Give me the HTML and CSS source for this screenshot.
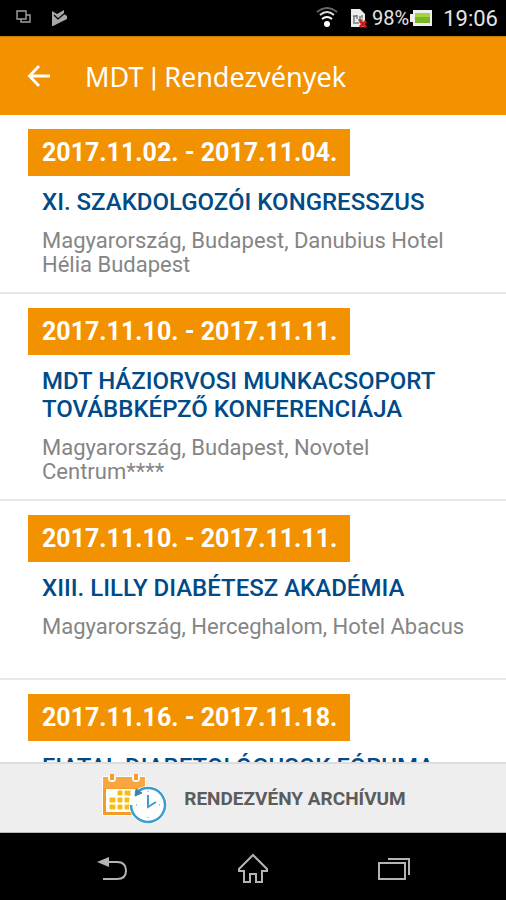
FILE: index.html
```html
<!DOCTYPE html>
<html lang="hu">
<head>
  <meta charset="UTF-8">
  <title>MDT | Rendezvények</title>
  <meta name="viewport" content="width=device-width, initial-scale=1.0">
  <link rel="stylesheet" href="styles.css">
</head>
<body>

  <div class="status-bar">
    <div class="status-left">
      <svg width="16" height="16" viewBox="0 0 16 16" fill="none" stroke="#a0a0a0" stroke-width="1.4">
        <path d="M1 1h9v8H1z"/>
        <path d="M5 9v3h9V5h-4"/>
      </svg>
      <svg width="18" height="18" viewBox="0 0 18 18">
        <path d="M2 2l5 3 7-4v4l3 2v3L3 17H2z" fill="#a8a8a8"/>
        <path d="M4 6l4 4 7-6" fill="none" stroke="#000" stroke-width="1.2"/>
      </svg>
    </div>
    <div class="status-right">
      <svg width="22" height="22" viewBox="0 0 22 22" fill="none" stroke-width="2">
        <circle cx="11" cy="17" r="3" fill="#fff"/>
        <path d="M6 12q5-4 10 0" stroke="#fff"/>
        <path d="M4 8q7-6 14 0" stroke="#ddd"/>
        <path d="M1 5q10-8 20 0" stroke="#666"/>
      </svg>
      <svg class="sim" width="18" height="20" viewBox="0 0 18 20">
        <path d="M1 1h9l5 5v13H1z" fill="#eee"/>
        <path d="M4 8v6M7 7v4M10 8v6M12 7v3M3 8h4M8 12h5M3 15h6" stroke="#444" stroke-width="1"/>
        <path d="M10 13l6 6M16 13l-6 6" stroke="#d81818" stroke-width="3"/>
      </svg>
      <span class="percent">98%</span>
      <svg width="24" height="18" viewBox="0 0 24 18">
        <path d="M4 1h19v16H4v-4H1V5h3z" fill="#eee"/>
        <path d="M6 4h15v10H6z" fill="#7db52a"/>
        <path d="M6 4h15v4H6z" fill="#a5d43c"/>
      </svg>
      <span class="clock">19:06</span>
    </div>
  </div>

  <header class="app-bar">
    <button class="back" aria-label="Vissza">
      <svg width="24" height="24" viewBox="0 0 24 24" fill="none" stroke="#fff" stroke-width="2.8">
        <path d="M23 12H3M12 2L2.500 12 12 22"/>
      </svg>
    </button>
    <h1>MDT <span class="divider">|</span> Rendezvények</h1>
  </header>

  <main class="events">
    <article class="event">
      <div class="date">2017.11.02. - 2017.11.04.</div>
      <h2>XI. SZAKDOLGOZÓI KONGRESSZUS</h2>
      <p>Magyarország, Budapest, Danubius Hotel Hélia Budapest</p>
    </article>
    <article class="event">
      <div class="date">2017.11.10. - 2017.11.11.</div>
      <h2>MDT HÁZIORVOSI MUNKACSOPORT TOVÁBBKÉPZŐ KONFERENCIÁJA</h2>
      <p>Magyarország, Budapest, Novotel Centrum****</p>
    </article>
    <article class="event">
      <div class="date">2017.11.10. - 2017.11.11.</div>
      <h2>XIII. LILLY DIABÉTESZ AKADÉMIA</h2>
      <p>Magyarország, Herceghalom, Hotel Abacus</p>
    </article>
    <article class="event">
      <div class="date">2017.11.16. - 2017.11.18.</div>
      <h2>FIATAL DIABETOLÓGUSOK FÓRUMA</h2>
    </article>
  </main>

  <button class="archive">
    <svg width="68" height="54" viewBox="0 0 68 54">
      <path d="M2 5h44v40H2z" fill="#fff"/>
      <path d="M3 6h42v38H3z" fill="#f49b28"/>
      <path d="M6 18h36v23H6z" fill="#fff"/>
      <path d="M3 6h42v11H3z" fill="#f8a640"/>
      <g fill="#fff"><circle cx="12" cy="7" r="4"/><circle cx="36" cy="7" r="4"/></g>
      <path d="M12 3v6M36 3v6" stroke="#f49b28" stroke-width="4"/>
      <path d="M18 20h4v4h-4zM25 20h5v4h-5zM10 27h5v4h-5zM18 27h4v4h-4zM25 27h4v4h-4zM10 34h5v4h-5zM18 34h4v4h-4zM25 34h4v4h-4z" fill="#f8bd14" stroke="#f8bd14"/>
      <circle cx="48" cy="34" r="19" fill="#fff"/>
      <path d="M31 34A17 17 0 1 0 37 21" fill="none" stroke="#3d9dcc" stroke-width="2.500"/>
      <path d="M35 25l1-7 6 4z" fill="#3185b2" stroke="#3185b2"/>
      <path d="M48 24v12l8-5" fill="none" stroke="#3d9dcc" stroke-width="2"/>
      <path d="M48 20v1M48 46v1M36 34h1M59 34h1" stroke="#3d9dcc"/>
    </svg>
    <span>RENDEZVÉNY ARCHÍVUM</span>
  </button>

  <nav class="nav-bar">
    <button aria-label="Vissza">
      <svg width="32" height="26" viewBox="0 0 32 26" fill="none" stroke="#b4b4b4" stroke-width="2">
        <path d="M11 6h10q9 0 9 8.500T21 23H7"/>
        <path d="M1 6l12-5v10z" fill="#b4b4b4" stroke="none"/>
      </svg>
    </button>
    <button aria-label="Kezdőlap">
      <svg width="34" height="32" viewBox="0 0 34 32" fill="none" stroke="#b4b4b4" stroke-width="2">
        <path d="M17 2L3 16v2h5v11h6v-8h6v8h6V18h5v-2z"/>
      </svg>
    </button>
    <button aria-label="Legutóbbiak">
      <svg width="34" height="26" viewBox="0 0 34 26" fill="none" stroke="#b4b4b4" stroke-width="2">
        <path d="M2 7h26v16H2z"/>
        <path d="M11 3h21v16"/>
      </svg>
    </button>
  </nav>

</body>
</html>
```
FILE: styles.css
```css
* {
  box-sizing: border-box;
}
body {
  margin: 0;
  height: 100vh;
  display: flex;
  flex-direction: column;
  background-color: #fff;
  font-family: Roboto, sans-serif;
}
h1, h2, p {
  margin: 0;
}
button {
  border: none;
  background: none;
  padding: 0;
  font-family: inherit;
  cursor: pointer;
}
svg {
  display: block;
}
.status-bar {
  flex: none;
  height: 36px;
  padding: 0 8px 0 16px;
  display: flex;
  align-items: center;
  justify-content: space-between;
  background-color: #000;
  color: #e4e4e4;
}
.status-left {
  display: flex;
  align-items: center;
  gap: 18px;
}
.status-right {
  display: flex;
  align-items: center;
}
.sim {
  margin: 0 4px 0 12px;
}
.percent {
  font-size: 20px;
}
.clock {
  margin-left: 10px;
  font-size: 22px;
}
.app-bar {
  flex: none;
  height: 79px;
  padding-left: 27px;
  display: flex;
  align-items: center;
  gap: 34px;
  background-color: #f39200;
  border-top: 1px solid #c87b08;
}
.app-bar h1 {
  color: #fff;
  font-family: "Noto Sans", sans-serif;
  font-size: 27px;
  font-weight: 400;
}
.divider {
  font-family: Roboto, sans-serif;
  font-weight: 500;
}
.events {
  flex: 1;
  min-height: 0;
  overflow: hidden;
}
.event {
  min-height: 179px;
  padding: 14px 28px 15px;
  border-bottom: 2px solid #e8e8e8;
}
.date {
  width: fit-content;
  padding: 0 13px 0 14px;
  background-color: #f39200;
  color: #fff;
  font-size: 25px;
  font-weight: 700;
  line-height: 47px;
}
.event h2 {
  margin: 12px 0 0 14px;
  color: #004b87;
  font-size: 24px;
  font-weight: 500;
  line-height: 28px;
}
.event p {
  margin: 13px 0 0 14px;
  color: #858585;
  font-size: 22px;
  line-height: 24px;
}
.archive {
  flex: none;
  height: 71px;
  display: flex;
  align-items: center;
  justify-content: center;
  gap: 16px;
  background-color: #eee;
  border-top: 2px solid #ddd;
  border-bottom: 1px solid #bbb;
  color: #5c5c5c;
  font-size: 19px;
  font-weight: 700;
}
.nav-bar {
  flex: none;
  height: 67px;
  padding: 4px 42px 0;
  display: flex;
  align-items: center;
  background-color: #000;
}
.nav-bar button {
  flex: 1;
  display: flex;
  justify-content: center;
}
```
